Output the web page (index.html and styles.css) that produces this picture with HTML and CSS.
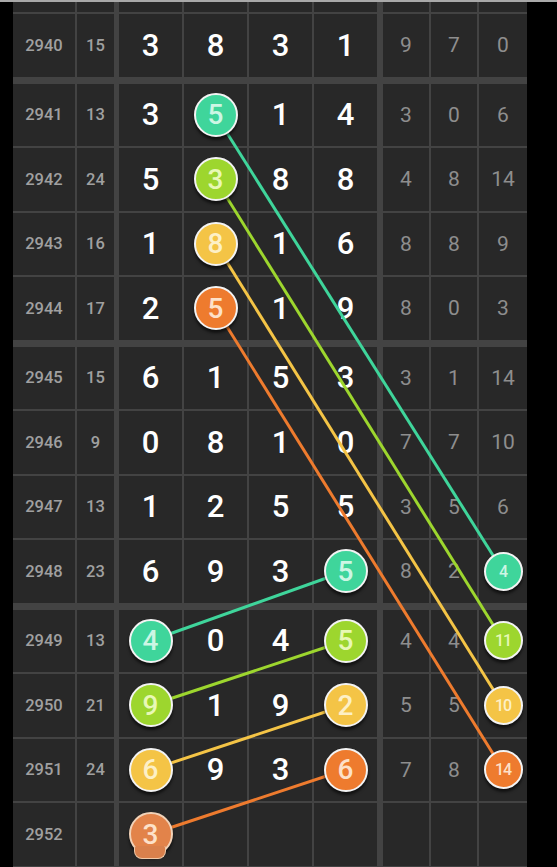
FILE: index.html
```html
<!DOCTYPE html>
<html lang="en">
<head>
    <meta charset="UTF-8">
    <meta name="viewport" content="width=device-width, initial-scale=1.0">
    <title>Trend Chart</title>
    <link rel="stylesheet" href="styles.css">
</head>
<body>
    <div class="board" id="board">
        <svg class="links" id="links"></svg>
    </div>
<script>
    const rows = [
        [2940, 15, [3, 8, 3, 1], [9, 7, 0]],
        [2941, 13, [3, 5, 1, 4], [3, 0, 6]],
        [2942, 24, [5, 3, 8, 8], [4, 8, 14]],
        [2943, 16, [1, 8, 1, 6], [8, 8, 9]],
        [2944, 17, [2, 5, 1, 9], [8, 0, 3]],
        [2945, 15, [6, 1, 5, 3], [3, 1, 14]],
        [2946, 9, [0, 8, 1, 0], [7, 7, 10]],
        [2947, 13, [1, 2, 5, 5], [3, 5, 6]],
        [2948, 23, [6, 9, 3, 5], [8, 2, 4]],
        [2949, 13, [4, 0, 4, 5], [4, 4, 11]],
        [2950, 21, [9, 1, 9, 2], [5, 5, 10]],
        [2951, 24, [6, 9, 3, 6], [7, 8, 14]],
        [2952, "", [3, "", "", ""], ["", "", ""]]
    ];

    // issue -> { column index (0-3 main, 4-6 right): colour }
    const balls = {
        2941: { 1: "teal" },
        2942: { 1: "lime" },
        2943: { 1: "gold" },
        2944: { 1: "orange" },
        2948: { 3: "teal", 6: "teal" },
        2949: { 0: "teal", 3: "lime", 6: "lime" },
        2950: { 0: "lime", 3: "gold", 6: "gold" },
        2951: { 0: "gold", 3: "orange", 6: "orange" },
        2952: { 0: "orange" }
    };

    const links = [
        ["2941-1", "2948-6", "teal"],
        ["2942-1", "2949-6", "lime"],
        ["2943-1", "2950-6", "gold"],
        ["2944-1", "2951-6", "orange"],
        ["2948-3", "2949-0", "teal"],
        ["2949-3", "2950-0", "lime"],
        ["2950-3", "2951-0", "gold"],
        ["2951-3", "2952-0", "orange"]
    ];

    const colours = { teal: "#3fd59b", lime: "#9dd62e", gold: "#f4c446", orange: "#ee7b2e" };

    const board = document.getElementById("board");

    function addCell(cls, content) {
        const cell = document.createElement("div");
        cell.className = "cell " + cls;
        if (content instanceof Node) cell.appendChild(content);
        else cell.textContent = content;
        board.appendChild(cell);
        return cell;
    }

    // the cut-off row at the top
    for (let i = 0; i < 9; i++) {
        addCell("edge" + (i === 2 ? " main-first" : "") + (i === 6 ? " side-first" : ""), "");
    }

    rows.forEach((row, r) => {
        const [issue, sum, main, side] = row;
        const groupStart = r % 4 === 1 ? " group" : "";
        const marks = balls[issue] || {};

        addCell("issue" + groupStart, issue);
        addCell("sum" + groupStart, sum);

        main.concat(side).forEach((n, i) => {
            let cls = i < 4 ? "main" : "side";
            if (i === 0) cls += " main-first";
            if (i === 4) cls += " side-first";
            let content = n;
            if (marks[i]) {
                const ball = document.createElement("span");
                ball.className = "ball " + marks[i] + (i >= 4 ? " sm" : "") + (issue === 2952 ? " pin" : "");
                ball.id = issue + "-" + i;
                ball.textContent = n;
                content = ball;
            }
            addCell(cls + groupStart, content);
        });
    });

    function centre(id) {
        const box = document.getElementById(id).getBoundingClientRect();
        const base = board.getBoundingClientRect();
        return [box.left + box.width / 2 - base.left, box.top + box.height / 2 - base.top];
    }

    const svg = document.getElementById("links");
    svg.setAttribute("width", board.offsetWidth);
    svg.setAttribute("height", board.offsetHeight);
    links.forEach(([from, to, colour]) => {
        const [x1, y1] = centre(from);
        const [x2, y2] = centre(to);
        const line = document.createElementNS("http://www.w3.org/2000/svg", "line");
        line.setAttribute("x1", x1);
        line.setAttribute("y1", y1);
        line.setAttribute("x2", x2);
        line.setAttribute("y2", y2);
        line.setAttribute("stroke", colours[colour]);
        line.setAttribute("stroke-width", "3");
        svg.appendChild(line);
    });
</script>
</body>
</html>
```

FILE: styles.css
```css
body {
    margin: 0;
    background-color: #000;
    border-top: 2px solid #a9a9a9;
    font-family: Roboto, "Liberation Sans", sans-serif;
    height: 865px;
    overflow: hidden;
}
.board {
    position: relative;
    margin-left: 13px;
    width: 514px;
    display: grid;
    grid-template-columns: 62px 37px 66px 63px 63px 63px 50px 46px 48px;
    gap: 2px;
    background-color: #434343;
    padding-bottom: 2px;
}
.links {
    position: absolute;
    top: 0;
    left: 0;
    z-index: 1;
    pointer-events: none;
}
.cell {
    background-color: #282828;
    height: 62.5px;
    display: flex;
    align-items: center;
    justify-content: center;
    color: #a0a0a0;
}
.cell.edge {
    height: 10px;
}
.cell.group {
    margin-top: 5px;
}
.main-first {
    margin-left: 3px;
}
.side-first {
    margin-left: 4px;
}
.issue,
.sum {
    font-size: 16.5px;
    font-weight: 500;
}
.main {
    color: #fff;
    font-size: 31px;
    font-weight: 500;
}
.side {
    font-size: 21px;
    color: #8e8e8e;
}
.ball {
    position: relative;
    z-index: 2;
    width: 40px;
    height: 40px;
    border-radius: 50%;
    border: 2.5px solid #f3f3f3;
    display: flex;
    align-items: center;
    justify-content: center;
    font-size: 28px;
    font-weight: 500;
    box-shadow: 0 3px 3px rgba(0, 0, 0, 0.6);
}
.ball.sm {
    width: 35px;
    height: 35px;
    font-size: 16px;
    letter-spacing: -1px;
}
.ball.teal {
    background-color: #3fd59b;
    color: #cdf6e4;
}
.ball.lime {
    background-color: #9dd62e;
    color: #e8f8b6;
}
.ball.gold {
    background-color: #f4c446;
    color: #fdf0c6;
}
.ball.orange {
    background-color: #ee7b2e;
    color: #fde1c9;
}
.ball.pin {
    background-color: #e2834a;
    border-color: #f1d2b8;
}
.ball.pin::after {
    content: "";
    position: absolute;
    left: 3px;
    top: 32px;
    width: 30px;
    height: 12px;
    border: 1.5px solid #f1c9a8;
    border-top: none;
    border-radius: 2px 2px 8px 8px;
    background-color: #d9804c;
}
```
